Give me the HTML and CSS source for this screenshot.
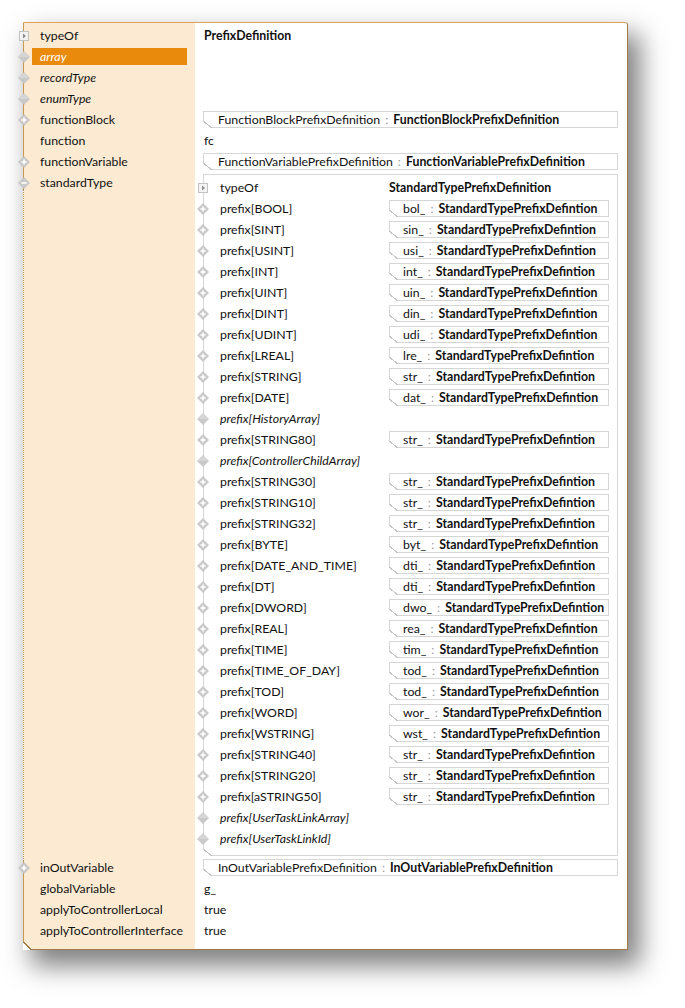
FILE: index.html
```html
<!DOCTYPE html>
<html lang="en">
<head>
  <meta charset="UTF-8">
  <title>PrefixDefinition</title>
  <link rel="stylesheet" href="styles.css">
</head>
<body>
  <svg class="defs" width="0" height="0">
    <symbol id="exp" viewBox="0 0 12 12">
      <rect x="1.5" y="1.5" width="9" height="9" fill="#f3f3f3" stroke="#c2c2c2"/>
      <path d="M5 3.5 L8 6 L5 8.5Z" fill="#8c8c8c"/>
    </symbol>
    <symbol id="dia" viewBox="0 0 12 12">
      <path d="M6 0.5 L11.5 6 L6 11.5 L0.5 6Z" fill="#c9c9c9" stroke="#bdbdbd" stroke-width="0.6"/>
      <path d="M6 0.8 L11.2 6 L0.8 6Z" fill="#d6d6d6"/>
    </symbol>
    <symbol id="plus" viewBox="0 0 12 12">
      <path d="M6 0.5 L11.5 6 L6 11.5 L0.5 6Z" fill="#c9c9c9" stroke="#bdbdbd" stroke-width="0.6"/>
      <path d="M6 3.4v5.2M3.4 6h5.2" stroke="#fff" stroke-width="1.6"/>
    </symbol>
    <symbol id="minus" viewBox="0 0 12 12">
      <path d="M6 0.5 L11.5 6 L6 11.5 L0.5 6Z" fill="#c9c9c9" stroke="#bdbdbd" stroke-width="0.6"/>
      <path d="M3.4 6h5.2" stroke="#fff" stroke-width="1.6"/>
    </symbol>
  </svg>

  <div class="panel">
    <div class="row">
      <div class="key"><svg class="ico"><use href="#exp"/></svg><span class="label">typeOf</span></div>
      <div class="val"><span class="text bold">PrefixDefinition</span></div>
    </div>
    <div class="row">
      <div class="key"><svg class="ico"><use href="#dia"/></svg><span class="label sel italic">array</span></div>
      <div class="val"></div>
    </div>
    <div class="row">
      <div class="key"><svg class="ico"><use href="#dia"/></svg><span class="label italic">recordType</span></div>
      <div class="val"></div>
    </div>
    <div class="row">
      <div class="key"><svg class="ico"><use href="#dia"/></svg><span class="label italic">enumType</span></div>
      <div class="val"></div>
    </div>
    <div class="row">
      <div class="key"><svg class="ico"><use href="#plus"/></svg><span class="label">functionBlock</span></div>
      <div class="val"><div class="vbox">FunctionBlockPrefixDefinition<span class="sep">:</span><b>FunctionBlockPrefixDefinition</b></div></div>
    </div>
    <div class="row">
      <div class="key"><span class="ico"></span><span class="label">function</span></div>
      <div class="val"><span class="text">fc</span></div>
    </div>
    <div class="row">
      <div class="key"><svg class="ico"><use href="#plus"/></svg><span class="label">functionVariable</span></div>
      <div class="val"><div class="vbox">FunctionVariablePrefixDefinition<span class="sep">:</span><b>FunctionVariablePrefixDefinition</b></div></div>
    </div>
    <div class="row">
      <div class="key open"><svg class="ico"><use href="#minus"/></svg><span class="label">standardType</span></div>
      <div class="val">
        <div class="nested">
          <div class="nrow">
            <div class="key"><svg class="ico"><use href="#exp"/></svg><span class="label">typeOf</span></div>
            <div class="nval"><b>StandardTypePrefixDefinition</b></div>
          </div>
          <div class="nrow"><div class="key"><svg class="ico"><use href="#plus"/></svg><span class="label">prefix[BOOL]</span></div><div class="nval"><div class="vbox small">bol_<span class="sep">:</span><b>StandardTypePrefixDefintion</b></div></div></div>
          <div class="nrow"><div class="key"><svg class="ico"><use href="#plus"/></svg><span class="label">prefix[SINT]</span></div><div class="nval"><div class="vbox small">sin_<span class="sep">:</span><b>StandardTypePrefixDefintion</b></div></div></div>
          <div class="nrow"><div class="key"><svg class="ico"><use href="#plus"/></svg><span class="label">prefix[USINT]</span></div><div class="nval"><div class="vbox small">usi_<span class="sep">:</span><b>StandardTypePrefixDefintion</b></div></div></div>
          <div class="nrow"><div class="key"><svg class="ico"><use href="#plus"/></svg><span class="label">prefix[INT]</span></div><div class="nval"><div class="vbox small">int_<span class="sep">:</span><b>StandardTypePrefixDefintion</b></div></div></div>
          <div class="nrow"><div class="key"><svg class="ico"><use href="#plus"/></svg><span class="label">prefix[UINT]</span></div><div class="nval"><div class="vbox small">uin_<span class="sep">:</span><b>StandardTypePrefixDefintion</b></div></div></div>
          <div class="nrow"><div class="key"><svg class="ico"><use href="#plus"/></svg><span class="label">prefix[DINT]</span></div><div class="nval"><div class="vbox small">din_<span class="sep">:</span><b>StandardTypePrefixDefintion</b></div></div></div>
          <div class="nrow"><div class="key"><svg class="ico"><use href="#plus"/></svg><span class="label">prefix[UDINT]</span></div><div class="nval"><div class="vbox small">udi_<span class="sep">:</span><b>StandardTypePrefixDefintion</b></div></div></div>
          <div class="nrow"><div class="key"><svg class="ico"><use href="#plus"/></svg><span class="label">prefix[LREAL]</span></div><div class="nval"><div class="vbox small">lre_<span class="sep">:</span><b>StandardTypePrefixDefintion</b></div></div></div>
          <div class="nrow"><div class="key"><svg class="ico"><use href="#plus"/></svg><span class="label">prefix[STRING]</span></div><div class="nval"><div class="vbox small">str_<span class="sep">:</span><b>StandardTypePrefixDefintion</b></div></div></div>
          <div class="nrow"><div class="key"><svg class="ico"><use href="#plus"/></svg><span class="label">prefix[DATE]</span></div><div class="nval"><div class="vbox small">dat_<span class="sep">:</span><b>StandardTypePrefixDefintion</b></div></div></div>
          <div class="nrow"><div class="key"><svg class="ico"><use href="#dia"/></svg><span class="label italic">prefix[HistoryArray]</span></div><div class="nval"></div></div>
          <div class="nrow"><div class="key"><svg class="ico"><use href="#plus"/></svg><span class="label">prefix[STRING80]</span></div><div class="nval"><div class="vbox small">str_<span class="sep">:</span><b>StandardTypePrefixDefintion</b></div></div></div>
          <div class="nrow"><div class="key"><svg class="ico"><use href="#dia"/></svg><span class="label italic">prefix[ControllerChildArray]</span></div><div class="nval"></div></div>
          <div class="nrow"><div class="key"><svg class="ico"><use href="#plus"/></svg><span class="label">prefix[STRING30]</span></div><div class="nval"><div class="vbox small">str_<span class="sep">:</span><b>StandardTypePrefixDefintion</b></div></div></div>
          <div class="nrow"><div class="key"><svg class="ico"><use href="#plus"/></svg><span class="label">prefix[STRING10]</span></div><div class="nval"><div class="vbox small">str_<span class="sep">:</span><b>StandardTypePrefixDefintion</b></div></div></div>
          <div class="nrow"><div class="key"><svg class="ico"><use href="#plus"/></svg><span class="label">prefix[STRING32]</span></div><div class="nval"><div class="vbox small">str_<span class="sep">:</span><b>StandardTypePrefixDefintion</b></div></div></div>
          <div class="nrow"><div class="key"><svg class="ico"><use href="#plus"/></svg><span class="label">prefix[BYTE]</span></div><div class="nval"><div class="vbox small">byt_<span class="sep">:</span><b>StandardTypePrefixDefintion</b></div></div></div>
          <div class="nrow"><div class="key"><svg class="ico"><use href="#plus"/></svg><span class="label">prefix[DATE_AND_TIME]</span></div><div class="nval"><div class="vbox small">dti_<span class="sep">:</span><b>StandardTypePrefixDefintion</b></div></div></div>
          <div class="nrow"><div class="key"><svg class="ico"><use href="#plus"/></svg><span class="label">prefix[DT]</span></div><div class="nval"><div class="vbox small">dti_<span class="sep">:</span><b>StandardTypePrefixDefintion</b></div></div></div>
          <div class="nrow"><div class="key"><svg class="ico"><use href="#plus"/></svg><span class="label">prefix[DWORD]</span></div><div class="nval"><div class="vbox small">dwo_<span class="sep">:</span><b>StandardTypePrefixDefintion</b></div></div></div>
          <div class="nrow"><div class="key"><svg class="ico"><use href="#plus"/></svg><span class="label">prefix[REAL]</span></div><div class="nval"><div class="vbox small">rea_<span class="sep">:</span><b>StandardTypePrefixDefintion</b></div></div></div>
          <div class="nrow"><div class="key"><svg class="ico"><use href="#plus"/></svg><span class="label">prefix[TIME]</span></div><div class="nval"><div class="vbox small">tim_<span class="sep">:</span><b>StandardTypePrefixDefintion</b></div></div></div>
          <div class="nrow"><div class="key"><svg class="ico"><use href="#plus"/></svg><span class="label">prefix[TIME_OF_DAY]</span></div><div class="nval"><div class="vbox small">tod_<span class="sep">:</span><b>StandardTypePrefixDefintion</b></div></div></div>
          <div class="nrow"><div class="key"><svg class="ico"><use href="#plus"/></svg><span class="label">prefix[TOD]</span></div><div class="nval"><div class="vbox small">tod_<span class="sep">:</span><b>StandardTypePrefixDefintion</b></div></div></div>
          <div class="nrow"><div class="key"><svg class="ico"><use href="#plus"/></svg><span class="label">prefix[WORD]</span></div><div class="nval"><div class="vbox small">wor_<span class="sep">:</span><b>StandardTypePrefixDefintion</b></div></div></div>
          <div class="nrow"><div class="key"><svg class="ico"><use href="#plus"/></svg><span class="label">prefix[WSTRING]</span></div><div class="nval"><div class="vbox small">wst_<span class="sep">:</span><b>StandardTypePrefixDefintion</b></div></div></div>
          <div class="nrow"><div class="key"><svg class="ico"><use href="#plus"/></svg><span class="label">prefix[STRING40]</span></div><div class="nval"><div class="vbox small">str_<span class="sep">:</span><b>StandardTypePrefixDefintion</b></div></div></div>
          <div class="nrow"><div class="key"><svg class="ico"><use href="#plus"/></svg><span class="label">prefix[STRING20]</span></div><div class="nval"><div class="vbox small">str_<span class="sep">:</span><b>StandardTypePrefixDefintion</b></div></div></div>
          <div class="nrow"><div class="key"><svg class="ico"><use href="#plus"/></svg><span class="label">prefix[aSTRING50]</span></div><div class="nval"><div class="vbox small">str_<span class="sep">:</span><b>StandardTypePrefixDefintion</b></div></div></div>
          <div class="nrow"><div class="key"><svg class="ico"><use href="#dia"/></svg><span class="label italic">prefix[UserTaskLinkArray]</span></div><div class="nval"></div></div>
          <div class="nrow"><div class="key"><svg class="ico"><use href="#dia"/></svg><span class="label italic">prefix[UserTaskLinkId]</span></div><div class="nval"></div></div>
        </div>
      </div>
    </div>
    <div class="row">
      <div class="key"><svg class="ico"><use href="#plus"/></svg><span class="label">inOutVariable</span></div>
      <div class="val"><div class="vbox">InOutVariablePrefixDefinition<span class="sep">:</span><b>InOutVariablePrefixDefinition</b></div></div>
    </div>
    <div class="row">
      <div class="key"><span class="ico"></span><span class="label">globalVariable</span></div>
      <div class="val"><span class="text">g_</span></div>
    </div>
    <div class="row">
      <div class="key"><span class="ico"></span><span class="label">applyToControllerLocal</span></div>
      <div class="val"><span class="text">true</span></div>
    </div>
    <div class="row">
      <div class="key"><span class="ico"></span><span class="label">applyToControllerInterface</span></div>
      <div class="val"><span class="text">true</span></div>
    </div>
  </div>
</body>
</html>
```

FILE: styles.css
```css
html, body {
  height: 100%;
}

body {
  margin: 0;
  background: #fff;
  font-family: "Segoe UI", Lato, "Open Sans", sans-serif;
  font-size: 12.3px;
  color: #111;
  overflow: hidden;
}

.defs {
  position: absolute;
  width: 0;
  height: 0;
}

.panel {
  position: relative;
  width: 603px;
  margin: 22px 0 0 23px;
  padding: 2px 0 8px;
  border: 1px solid;
  border-color: #dca45a #a27a48 #a27a48 #c9984f;
  border-radius: 0 3px 0 0;
  background: linear-gradient(to right, #fcebd2 171px, #fff 171px);
  box-shadow: 10px 14px 26px 2px rgba(0, 0, 0, 0.5);
}

/* bevelled bottom-left corner */
.panel::after {
  content: "";
  position: absolute;
  left: -1px;
  bottom: -1px;
  width: 9px;
  height: 8px;
  background: linear-gradient(to top right, #fff 0 calc(50% - 0.7px), #a27a48 calc(50% - 0.7px) calc(50% + 0.7px), transparent calc(50% + 0.7px));
}

.row {
  display: grid;
  grid-template-columns: 171px 1fr;
  min-height: 21px;
}

.key {
  display: flex;
  align-items: center;
  align-self: start;
  height: 21px;
  position: relative;
}

.key.open::before {
  content: "";
  position: absolute;
  left: -1px;
  top: 17px;
  height: 672px;
  width: 0;
  border-left: 1px dotted #b98a4e;
  background: #fff;
}

.ico {
  flex: none;
  width: 12px;
  height: 12px;
  margin-left: -6px;
}

.label {
  flex: 1;
  height: 17px;
  line-height: 17px;
  margin: 0 8px 0 2px;
  padding-left: 8px;
  white-space: nowrap;
}

.italic {
  font-style: italic;
}

.label.sel {
  background: #ea8a0d;
  color: #fff;
}

.val {
  padding: 0 9px 0 8px;
}

.text {
  display: block;
  line-height: 21px;
  padding-left: 1px;
}

.bold {
  font-weight: bold;
}

.vbox {
  position: relative;
  height: 15px;
  line-height: 15px;
  margin: 2px 0 2px;
  padding-left: 14px;
  border: 1px solid #d6d6d6;
  white-space: nowrap;
}

.vbox::before {
  content: "";
  position: absolute;
  left: -1px;
  bottom: -1px;
  width: 9px;
  height: 7px;
  background: linear-gradient(to top right, #fff 0 calc(50% - 0.6px), #c4c4c4 calc(50% - 0.6px) calc(50% + 0.6px), transparent calc(50% + 0.6px));
}

.sep {
  color: #9a9a9a;
  margin: 0 5px;
}

.nested {
  position: relative;
  margin: 2px 0 1px;
  padding: 2px 8px 6px 0;
  border: 1px solid #d6d6d6;
}

.nested::after {
  content: "";
  position: absolute;
  left: -1px;
  bottom: -1px;
  width: 9px;
  height: 7px;
  background: linear-gradient(to top right, #fff 0 calc(50% - 0.6px), #c4c4c4 calc(50% - 0.6px) calc(50% + 0.6px), transparent calc(50% + 0.6px));
}

.nrow {
  display: grid;
  grid-template-columns: 185px 1fr;
  height: 21px;
}

.nrow .ico {
  margin-left: -7px;
}

.nrow .label {
  margin-left: 3px;
}

.nval {
  display: flex;
  align-items: center;
}

.vbox.small {
  flex: 1;
  margin: 0;
  padding-left: 13px;
}
```
